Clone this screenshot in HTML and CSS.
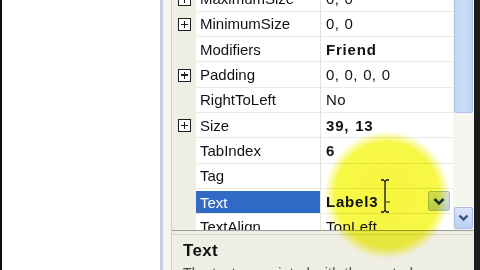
FILE: index.html
```html
<!DOCTYPE html>
<html>
<head>
<meta charset="utf-8">
<link rel="stylesheet" href="styles.css">
</head>
<body>
<div class="screen">
  <div class="edge"></div>
  <div class="blank"></div>
  <div class="frame"></div>
  <div class="frame2"></div>
  <div class="panel">
    <div class="grid-area">
      <div class="rows">
        <div class="row"><div class="gut"><span class="plus"></span></div><div class="name">MaximumSize</div><div class="val">0, 0</div></div>
        <div class="row"><div class="gut"><span class="plus"></span></div><div class="name">MinimumSize</div><div class="val">0, 0</div></div>
        <div class="row"><div class="gut"></div><div class="name">Modifiers</div><div class="val bold">Friend</div></div>
        <div class="row"><div class="gut"><span class="plus"></span></div><div class="name">Padding</div><div class="val">0, 0, 0, 0</div></div>
        <div class="row"><div class="gut"></div><div class="name">RightToLeft</div><div class="val">No</div></div>
        <div class="row"><div class="gut"><span class="plus"></span></div><div class="name">Size</div><div class="val bold">39, 13</div></div>
        <div class="row"><div class="gut"></div><div class="name">TabIndex</div><div class="val bold">6</div></div>
        <div class="row"><div class="gut"></div><div class="name">Tag</div><div class="val"></div></div>
        <div class="row sel"><div class="gut"></div><div class="name">Text</div><div class="val bold">Label3<span class="drop"><svg width="12" height="9" viewBox="0 0 12 9"><path d="M1.5 2 L6 6.5 L10.5 2" fill="none" stroke="#1c3560" stroke-width="2.6"/></svg></span></div></div>
        <div class="row"><div class="gut"></div><div class="name">TextAlign</div><div class="val">TopLeft</div></div>
      </div>
      <div class="scroll">
        <div class="thumb"></div>
        <div class="track"></div>
        <div class="down"><svg width="11" height="8" viewBox="0 0 11 8"><path d="M1.5 1.5 L5.5 5.5 L9.5 1.5" fill="none" stroke="#3b4f78" stroke-width="2.4"/></svg></div>
      </div>
    </div>
    <div class="splitter"></div>
    <div class="desc">
      <div class="desc-title">Text</div>
      <div class="desc-text">The text associated with the control.</div>
    </div>
  </div>
  <div class="right-edge"></div>
  <div class="spot"></div>
  <svg class="ibeam" width="12" height="34" viewBox="0 0 12 34"><path d="M2 1 H5 M7 1 H10 M6 2 V32 M2 33 H5 M7 33 H10 M5 1.5 L6 2.5 L7 1.5 M5 32.5 L6 31.5 L7 32.5" fill="none" stroke="#111" stroke-width="1.3"/><path d="M7 23 H11" stroke="#333" stroke-width="1"/></svg>
</div>
</body>
</html>
```
FILE: styles.css
```css
html, body {
  margin: 0;
  padding: 0;
}
body {
  width: 480px;
  height: 270px;
  overflow: hidden;
  background: #ffffff;
  font-family: "Liberation Sans", Arial, sans-serif;
  color: #111;
}
.screen {
  position: relative;
  display: flex;
  height: 270px;
}
.edge {
  width: 2px;
  background: #0d0d0d;
}
.blank {
  width: 158px;
  background: #fff;
}
.frame {
  width: 3px;
  background: #c9cee2;
}
.frame2 {
  width: 8px;
  background: #f4f4f3;
  border-right: 1px solid #d3d2ca;
}
.panel {
  width: 302px;
  display: flex;
  flex-direction: column;
  background: #efeee4;
}
.right-edge {
  width: 6px;
  background: #1b1b1b;
}
.grid-area {
  height: 230px;
  display: flex;
  border-bottom: 1px solid #9c9c96;
  overflow: hidden;
  background: #fff;
}
.rows {
  width: 281px;
  margin-top: -13.5px;
}
.row {
  display: grid;
  grid-template-columns: 24px 124px 1fr;
  height: 25.3px;
  font-size: 15px;
}
.gut {
  background: #efeee4;
  display: flex;
  align-items: center;
  padding-left: 6px;
}
.plus {
  position: relative;
  width: 11px;
  height: 11px;
  border: 1px solid #1e1e1e;
  background: #fff;
}
.plus::before,
.plus::after {
  content: "";
  position: absolute;
  background: #1e1e1e;
}
.plus::before {
  left: 2px;
  top: 4.75px;
  width: 7px;
  height: 1.5px;
}
.plus::after {
  left: 4.75px;
  top: 2px;
  width: 1.5px;
  height: 7px;
}
.name {
  display: flex;
  align-items: center;
  padding-left: 4px;
  border-bottom: 1px solid #ebeae3;
  white-space: nowrap;
}
.val {
  display: flex;
  align-items: center;
  padding-left: 5px;
  border-left: 1px solid #e3e2da;
  border-bottom: 1px solid #ebeae3;
  white-space: nowrap;
  word-spacing: 1px;
  letter-spacing: 0.3px;
}
.bold {
  font-weight: bold;
  letter-spacing: 0.8px;
}
.sel .name {
  background: #316ac5;
  color: #fff;
  border-top: 2px solid #fff;
}
.drop {
  margin-left: auto;
  margin-right: 3px;
  width: 20px;
  height: 18px;
  border: 1px solid #a8bce2;
  border-radius: 2px;
  background: linear-gradient(#d9e5fb, #bfd1f3);
  display: flex;
  align-items: center;
  justify-content: center;
}
.scroll {
  width: 21px;
  display: flex;
  flex-direction: column;
  background: #f6f6f1;
  padding: 0 1px 1px 1px;
  box-sizing: border-box;
}
.thumb {
  height: 112px;
  border: 1px solid #adc2ea;
  border-top: none;
  border-radius: 0 0 2px 2px;
  background: linear-gradient(90deg, #c2d4f3, #cddcf7 50%, #c0d2f2);
}
.track {
  flex: 1;
}
.down {
  height: 20px;
  border: 1px solid #a9bde4;
  border-radius: 2px;
  background: linear-gradient(#dae5fa, #bccff2);
  display: flex;
  align-items: center;
  justify-content: center;
}
.splitter {
  height: 3px;
  background: #efeee4;
  border-bottom: 1px solid #d8d7ce;
}
.desc {
  flex: 1;
  padding: 6px 0 0 11px;
  background: #efeee4;
  overflow: hidden;
}
.desc-title {
  font-size: 17px;
  font-weight: bold;
  line-height: 20px;
  letter-spacing: 0.3px;
}
.desc-text {
  font-size: 14px;
  line-height: 16px;
  margin-top: 4px;
  color: #4a4a4a;
  white-space: nowrap;
  letter-spacing: 0.3px;
}
.spot {
  position: absolute;
  left: 324px;
  top: 131px;
  width: 126px;
  height: 128px;
  border-radius: 50%;
  background: radial-gradient(closest-side, rgb(247, 247, 64) 0%, rgb(247, 247, 70) 82%, rgba(255, 255, 255, 0) 100%);
  mix-blend-mode: multiply;
  pointer-events: none;
}
.ibeam {
  position: absolute;
  left: 379px;
  top: 179px;
}
```
